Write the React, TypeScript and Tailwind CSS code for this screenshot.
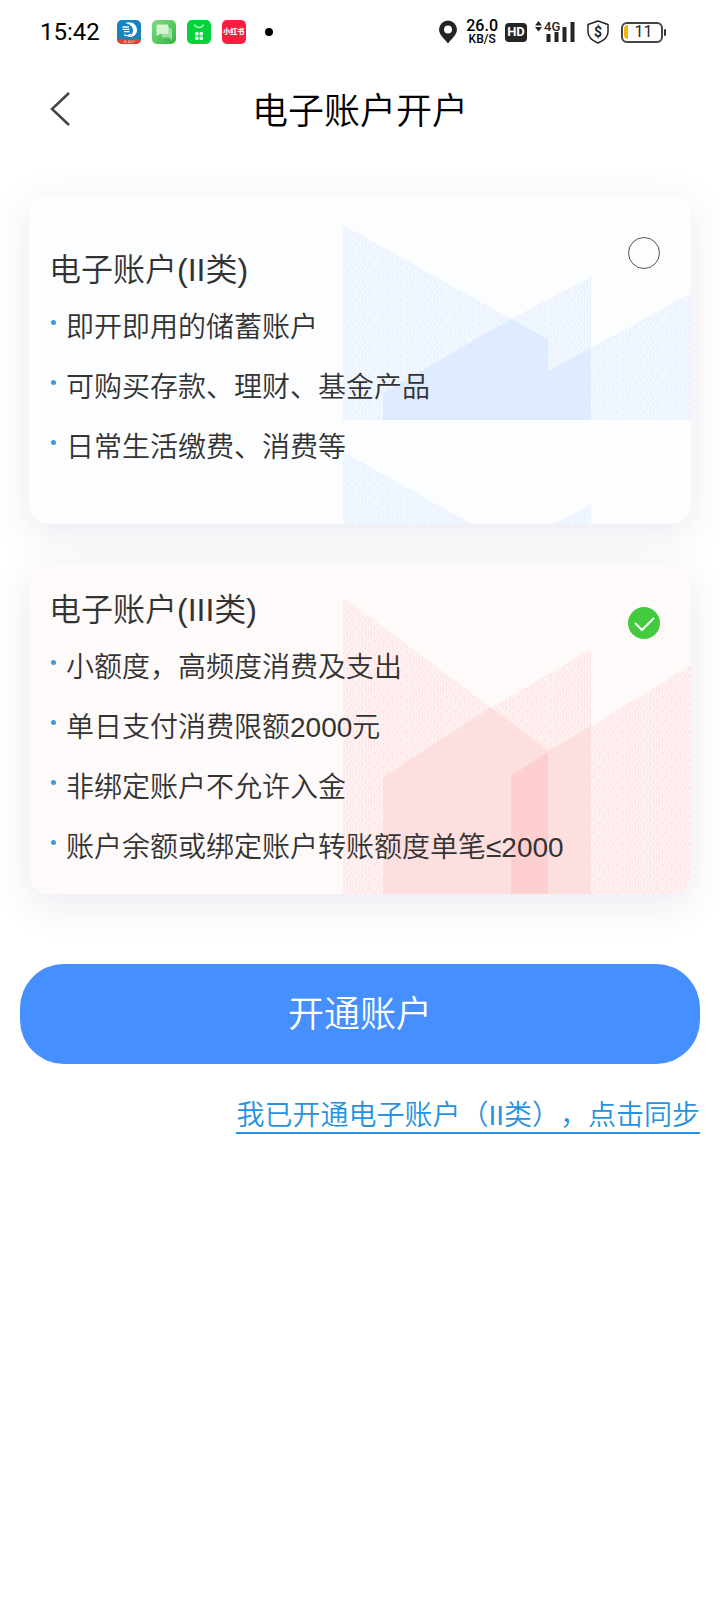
import { useState } from "react";
import type { ReactNode } from "react";

type Tone = "blue" | "red";

interface Account {
  id: string;
  title: string;
  tone: Tone;
  items: string[];
}

const accounts: Account[] = [
  {
    id: "type2",
    title: "电子账户(II类)",
    tone: "blue",
    items: ["即开即用的储蓄账户", "可购买存款、理财、基金产品", "日常生活缴费、消费等"],
  },
  {
    id: "type3",
    title: "电子账户(III类)",
    tone: "red",
    items: [
      "小额度，高频度消费及支出",
      "单日支付消费限额2000元",
      "非绑定账户不允许入金",
      "账户余额或绑定账户转账额度单笔≤2000",
    ],
  },
];

function AppIcons() {
  return (
    <div className="flex items-center gap-[11px]" aria-hidden>
      <svg className="size-6" viewBox="0 0 24 24">
        <clipPath id="app-bank">
          <rect width="24" height="24" rx="5" />
        </clipPath>
        <g clipPath="url(#app-bank)">
          <rect width="24" height="24" fill="#1583bd" />
          <rect y="19" width="24" height="5" fill="#e8402f" />
          <path
            d="M8 3C14.500.8 20 4.500 20 10c0 5-4.500 8-9.500 6.800 3.600-.6 5.500-3 5.500-6.300C16 6.500 12.500 3.800 8 3Z"
            fill="#fff"
          />
          <path
            d="M5.500 7h6.500M5.500 9.300h7M7 11.600h5.500M7 14.500c2 1.500 5 1.200 7-.5"
            stroke="#fff"
            strokeWidth="1.300"
            fill="none"
          />
          <path d="M7 23l1.200-2.500L9.500 23M11 21h2.500M11 22.500h2.500M15 20.500V23M16.500 21h1.500" stroke="#fbd5cf" strokeWidth=".8" fill="none" />
        </g>
      </svg>
      <svg className="size-6" viewBox="0 0 24 24">
        <defs>
          <linearGradient id="app-chat" x1="0" y1="0" x2="1" y2="1">
            <stop offset="0" stopColor="#7fdc80" />
            <stop offset="1" stopColor="#35b545" />
          </linearGradient>
        </defs>
        <rect width="24" height="24" rx="5" fill="url(#app-chat)" />
        <path d="M12 8h6.500a1.500 1.500 0 0 1 1.500 1.500V20l-3-2.500h-5.500A1.500 1.500 0 0 1 10 16v-6Z" fill="#9be09e" />
        <path d="M6 4.500h9A1.500 1.500 0 0 1 16.500 6v6.500A1.500 1.500 0 0 1 15 14H8l-3.500 2V6A1.500 1.500 0 0 1 6 4.500Z" fill="#d5f3d3" />
      </svg>
      <svg className="size-6" viewBox="0 0 24 24">
        <rect width="24" height="24" rx="5" fill="#06d339" />
        <path d="M7.500 4.500c1.500 4 7.500 4 9 0" stroke="#c8f7d2" strokeWidth="1.200" fill="none" />
        <g fill="#e9fdee">
          <rect x="8" y="12" width="3.500" height="3.500" rx="1" />
          <rect x="12.500" y="12" width="3.500" height="3.500" rx="1" />
          <rect x="8" y="16.500" width="3.500" height="3.500" rx="1" />
          <rect x="12.500" y="16.500" width="3.500" height="3.500" rx="1" />
        </g>
      </svg>
      <span className="flex size-6 items-center justify-center rounded-[5px] bg-[#fb1c40] text-[7px] font-black whitespace-nowrap text-white">
        小红书
      </span>
    </div>
  );
}

function StatusBar() {
  return (
    <div className="flex h-16 items-center justify-between pr-[54px] pl-10 font-[Roboto,'Noto_Sans_CJK_SC',sans-serif]">
      <div className="flex items-center">
        <span className="mr-[17px] text-2xl font-normal text-black">15:42</span>
        <AppIcons />
        <span className="ml-[19px] size-2 rounded-full bg-black" />
      </div>
      <div className="flex items-center text-[#252525]">
        <svg className="mr-2 h-6 w-[20px]" viewBox="0 0 20 24" aria-hidden>
          <path
            fill="currentColor"
            fillRule="evenodd"
            d="M10 .5a9 9 0 0 1 9 9c0 5-5.500 9.500-9 14-3.500-4.500-9-9-9-14a9 9 0 0 1 9-9Zm0 5a4 4 0 1 0 0 8 4 4 0 0 0 0-8Z"
          />
        </svg>
        <div className="mr-[7px] flex flex-col items-center font-medium text-black">
          <span className="text-base leading-[14px]">26.0</span>
          <span className="text-xs leading-[12px]">KB/S</span>
        </div>
        <span className="mr-2 flex h-[19px] w-[22px] items-center justify-center rounded bg-[#252525] text-[13px] font-bold text-white">
          HD
        </span>
        <div className="relative mr-3 h-6 w-10">
          <svg className="h-6 w-10" viewBox="0 0 40 24" aria-hidden>
            <path
              fill="currentColor"
              d="M0 5.500 3.500 1 7 5.500ZM0 7h7l-3.500 4.500ZM11.500 14h4v8h-4ZM19.500 12h4v10h-4ZM27.500 7h4v15h-4ZM35.500 2h4v20h-4Z"
            />
          </svg>
          <span className="absolute top-0 left-[9px] text-[13px] leading-[13px] font-medium">4G</span>
        </div>
        <div className="relative mr-3 flex h-6 w-[22px] items-center justify-center">
          <svg className="absolute inset-0 h-6 w-[22px]" viewBox="0 0 22 24" fill="none" aria-hidden>
            <path
              d="M11 1 21 4.500V12c0 5-4 8.500-10 11C5 20.500 1 17 1 12V4.500Z"
              stroke="currentColor"
              strokeWidth="1.500"
              strokeLinejoin="round"
            />
          </svg>
          <span className="text-sm leading-none font-bold">$</span>
        </div>
        <div className="flex items-center gap-px">
          <div className="flex h-[21px] w-[42px] items-center rounded-md border-2 border-[#444] pl-px">
            <span className="h-[14px] w-1 rounded-l-sm bg-[#f7b500]" />
            <span className="flex-1 pr-0.5 text-center text-base leading-none font-normal">11</span>
          </div>
          <span className="h-[7px] w-0.5 rounded-sm bg-[#333]" />
        </div>
      </div>
    </div>
  );
}

/* Light squiggle texture used to fill the tall shapes on a card */
function Weave({ id, fill, line }: { id: string; fill: string; line: string }) {
  return (
    <pattern id={id} width="9" height="14" patternUnits="userSpaceOnUse">
      <rect width="9" height="14" fill={fill} />
      <path
        d="M1 0l1.500 3.500L1 7l1.500 3.500L1 14M5.500 0L4 3.500 6 7 4.500 10.500 5.500 14M8.500 1L7.300 5l1 4-.8 4"
        stroke={line}
        strokeWidth="1.200"
        strokeLinejoin="round"
        fill="none"
      />
    </pattern>
  );
}

function BlueArt() {
  return (
    <svg className="absolute inset-0 size-full" viewBox="0 0 662 330" preserveAspectRatio="none" aria-hidden>
      <defs>
        <Weave id="weave-blue" fill="#e9f2ff" line="#f9fcff" />
        <g id="houses-blue">
          <path d="M314 31 482 125 562 83V154L662 99V226H314Z" fill="url(#weave-blue)" />
          <path d="M354 226V199L482 125 519 145V177L562 154V226Z" fill="#dfebfe" />
        </g>
      </defs>
      <use href="#houses-blue" />
      <use href="#houses-blue" y="227" />
    </svg>
  );
}

function RedArt() {
  return (
    <svg className="absolute inset-0 size-full" viewBox="0 0 662 330" preserveAspectRatio="none" aria-hidden>
      <defs>
        <Weave id="weave-red" fill="#ffe7e7" line="#fff8f8" />
      </defs>
      <path d="M314 33 462 144 562 85V162L662 101V330H314Z" fill="url(#weave-red)" />
      <path d="M354 330V213L462 143 519 187 562 162V330Z" fill="#fedfe0" />
      <path d="M482 212 519 188V330H482Z" fill="#fecfd0" />
    </svg>
  );
}

interface AccountCardProps {
  account: Account;
  checked: boolean;
  onSelect: () => void;
  art: ReactNode;
}

function AccountCard({ account, checked, onSelect, art }: AccountCardProps) {
  return (
    <label
      className={`relative flex min-h-[330px] cursor-pointer items-center overflow-hidden rounded-[20px] pr-[31px] pl-5 shadow-[0_10px_40px_rgba(50,50,120,0.1)] ${
        account.tone === "blue" ? "bg-[#fbfdff]" : "bg-[#fefaf9]"
      }`}
    >
      {art}
      <div className="relative flex-1 pt-0.5 text-[#333]">
        <h2 className="text-[32px] leading-[56px]">{account.title}</h2>
        <ul>
          {account.items.map((item) => (
            <li key={item} className="flex items-center text-[28px] leading-[60px]">
              <span className="mr-2.5 mb-3 ml-0.5 size-[5px] rounded-full bg-[#3d9bd9]" />
              {item}
            </li>
          ))}
        </ul>
      </div>
      <span className="relative mt-[43px] size-8 shrink-0 self-start">
        <input
          type="radio"
          name="account"
          value={account.id}
          checked={checked}
          onChange={onSelect}
          aria-label={account.title}
          className="block size-8 appearance-none rounded-full border border-[#555] checked:border-0 checked:bg-[#43ca3e]"
        />
        {checked && (
          <svg className="pointer-events-none absolute inset-0 size-8" viewBox="0 0 32 32" fill="none" aria-hidden>
            <path d="M7 16l7 7L26 11" stroke="#fff" strokeWidth="2" />
          </svg>
        )}
      </span>
    </label>
  );
}

export default function App() {
  const [selected, setSelected] = useState("type3");

  return (
    <div className="min-h-screen bg-white font-['Liberation_Sans','Noto_Sans_CJK_SC',sans-serif] font-[350] [text-spacing-trim:space-all]">
      <StatusBar />

      <header className="grid h-[90px] grid-cols-[1fr_auto_1fr] items-center px-12">
        <button type="button" aria-label="返回" className="justify-self-start">
          <svg className="h-9 w-6" viewBox="0 0 24 36" fill="none" aria-hidden>
            <path d="M21 2 4 18l17 16" stroke="#444" strokeWidth="2.500" />
          </svg>
        </button>
        <h1 className="pt-1.5 text-4xl text-black">电子账户开户</h1>
      </header>

      <main>
        <div className="flex flex-col gap-10 px-[29px] pt-10">
          {accounts.map((account) => (
            <AccountCard
              key={account.id}
              account={account}
              checked={selected === account.id}
              onSelect={() => setSelected(account.id)}
              art={account.tone === "blue" ? <BlueArt /> : <RedArt />}
            />
          ))}
        </div>

        <div className="flex flex-col px-5 pt-[70px]">
          <button type="button" className="h-[100px] rounded-[44px] bg-[#458fff] pt-0.5 text-4xl text-white">
            开通账户
          </button>
          <a
            href="#sync"
            className="mt-9 self-end border-b-2 border-[#2492e0] text-[28px] leading-8 text-[#2492e0]"
          >
            我已开通电子账户（II类），点击同步
          </a>
        </div>
      </main>
    </div>
  );
}
